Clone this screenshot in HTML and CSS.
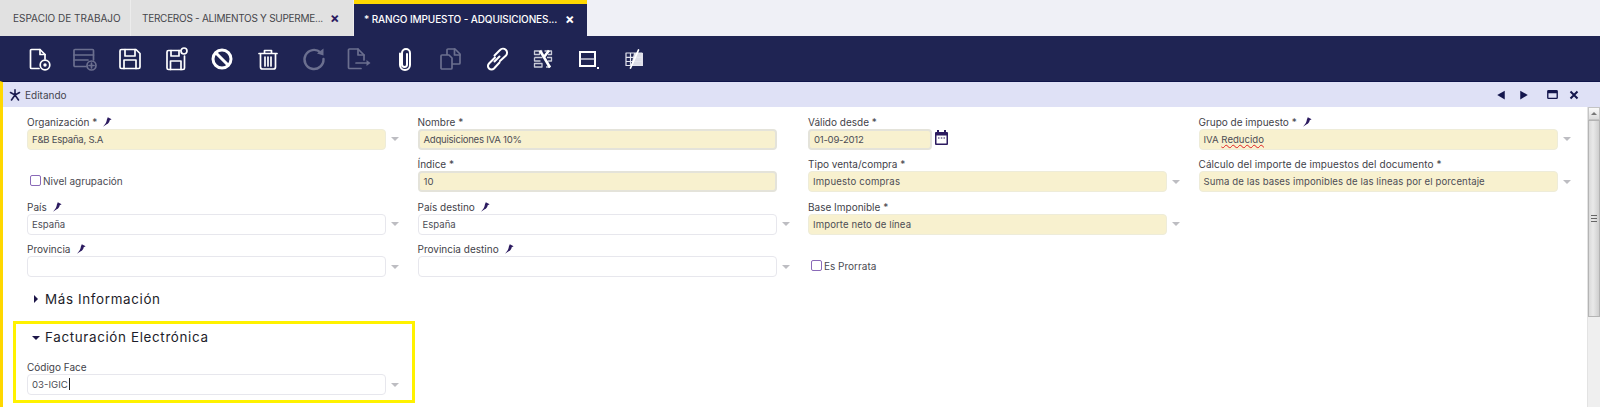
FILE: index.html
```html
<!DOCTYPE html>
<html lang="es">
<head>
<meta charset="utf-8">
<title>Rango impuesto</title>
<link rel="stylesheet" href="styles.css">
</head>
<body>
<svg class="sprites" width="0" height="0" aria-hidden="true">
  <symbol id="pin" viewBox="0 0 10 10"><path d="M5.800 .3 9.600 2.200 7.700 3.200C7.300 5.200 6.300 6.600 4.700 7.300 3.400 8 2.300 8.800 1 9.800 2 8.400 2.900 7.300 3.700 6.200 4.400 4.800 4.800 3.400 4.900 2.500Z"/></symbol>
</svg>

<nav class="tabs">
  <div class="tab tab-first"><span class="tab-text">ESPACIO DE TRABAJO</span></div>
  <div class="tab tab-second"><span class="tab-text">TERCEROS - ALIMENTOS Y SUPERME...</span><span class="tab-x">×</span></div>
  <div class="tab tab-active"><span class="tab-text">* RANGO IMPUESTO - ADQUISICIONES...</span><span class="tab-x">×</span></div>
</nav>

<div class="toolbar">
  <span class="tool"><svg viewBox="0 0 24 24"><path d="M12 21.500H4.500a1 1 0 0 1-1-1V3.500a1 1 0 0 1 1-1h8.500l5 5V12"/><path d="M13 2.500V7.500H18"/><circle cx="18" cy="18" r="4.800"/><circle class="fill" cx="18" cy="18" r="1.700"/></svg></span>
  <span class="tool off"><svg viewBox="0 0 24 24"><path d="M13 19.500H2a1 1 0 0 1-1-1V3.500a1 1 0 0 1 1-1h17.500a1 1 0 0 1 1 1V13"/><path d="M1 8h19.500M1 13h14"/><circle cx="18.500" cy="18.500" r="4.500"/><path d="M18.500 16v5M16 18.500h5"/></svg></span>
  <span class="tool"><svg viewBox="0 0 24 24"><path d="M4 2.500h14l4 4v13.500a1.500 1.500 0 0 1-1.500 1.500h-17a1.500 1.500 0 0 1-1.500-1.500v-16a1.500 1.500 0 0 1 1.500-1.500Z"/><path d="M7 2.500v6.500h10V2.500M6 21.500v-8.500h12v8.500"/></svg></span>
  <span class="tool"><svg viewBox="0 0 24 24"><path d="M16 3.500H4.500a1.500 1.500 0 0 0-1.500 1.500v16a1.500 1.500 0 0 0 1.500 1.500h14.500a1.500 1.500 0 0 0 1.500-1.500V9"/><path d="M7 3.500v5.500h8V3.500M6.500 22.500v-8.500h10.500v8.500"/><circle cx="20" cy="4" r="3"/></svg></span>
  <span class="tool bold"><svg viewBox="0 0 24 24"><circle cx="12" cy="12" r="9"/><path d="M6 6 18 18"/></svg></span>
  <span class="tool"><svg viewBox="0 0 24 24"><path d="M3 6.500h18M8.500 6V3.500h7V6"/><path d="M4.500 7v13a2 2 0 0 0 2 2h11a2 2 0 0 0 2-2V7"/><path d="M9 10v9M12 10v9M15 10v9"/></svg></span>
  <span class="tool off heavy"><svg viewBox="0 0 24 24"><path d="M18.500 5.500A9.500 9.500 0 1 0 21.500 12"/><path class="fill" d="M15 6.500 21.500 1.500V8.500Z"/></svg></span>
  <span class="tool off"><svg viewBox="0 0 24 24"><path d="M14 21.500H2.500a1 1 0 0 1-1-1V3a1 1 0 0 1 1-1h8.500l6 6v5"/><path d="M11 2v6h6M9 16h12"/><path class="fill" d="M19.500 13 23.500 16 19.500 19Z"/></svg></span>
  <span class="tool heavy"><svg viewBox="0 0 24 24"><path d="M7 6.500V18a5 5 0 0 0 10 0V6a4 4 0 0 0-8 0v11.500a2.500 2.500 0 0 0 5 0V7"/></svg></span>
  <span class="tool off"><svg viewBox="0 0 24 24"><path d="M10 22H3a1 1 0 0 1-1-1V9a1 1 0 0 1 1-1h7l3 3v10a1 1 0 0 1-1 1ZM8 8V3a1 1 0 0 1 1-1h7l5 5v9a1 1 0 0 1-1 1h-7"/><path d="M15.500 2v6h5.500"/></svg></span>
  <span class="tool heavy"><svg viewBox="0 0 24 24"><path d="M9.500 14.500 14.500 9.500M10 10.500 4 16.500a3.500 3.500 0 0 0 5 5l5.500-6M9.500 8.500 15 3a3.500 3.500 0 0 1 6 5.500l-6 5.500"/></svg></span>
  <span class="tool wrench"><svg viewBox="0 0 24 24"><path d="M3.500 4h5v3.500h-5ZM13.500 4h7v3.500h-3.500M3.500 10.500h8M16 10.500h4.500v3.500H17M3.500 10.500V14h6M3.500 16.500H11v3.500H3.500ZM18.500 18v2H15"/><path class="thick" d="M9 3.500 19 20.500M18 3.500 13 10M10 3.500v3"/></svg></span>
  <span class="tool frame"><svg viewBox="0 0 24 24"><rect x="4" y="5" width="15" height="14"/><path class="mid" d="M4 12h15"/><rect class="fill" x="21" y="20" width="2" height="2"/></svg></span>
  <span class="tool sheet"><svg viewBox="0 0 24 24"><path class="pale" d="M12 6h9v13H9Z"/><path class="line" d="M4 6h16v12.500H4ZM4 10.300h16M4 14.500h16M8.500 6v12.500"/><path class="thick" d="M16.500 3 8.500 21"/></svg></span>
</div>

<main class="workspace">
  <div class="status">
    <svg class="status-star" viewBox="0 0 12 12"><path d="M6 .8V5M6 6 1.500 3.500M6 6 10.500 3.500M6 6 2.500 11M6 6 9.500 11"/></svg>
    <span class="status-text">Editando</span>
    <span class="status-actions">
      <svg class="sa sa-prev" viewBox="0 0 8 8"><path d="M7 .5V7.500L1 4Z"/></svg>
      <svg class="sa sa-next" viewBox="0 0 8 8"><path d="M1 .5V7.500L7 4Z"/></svg>
      <svg class="sa sa-max" viewBox="0 0 12 10"><path fill-rule="evenodd" d="M1.500 0h9a1.500 1.500 0 0 1 1.500 1.500v7a1.500 1.500 0 0 1-1.500 1.500h-9a1.500 1.500 0 0 1-1.500-1.500v-7a1.500 1.500 0 0 1 1.500-1.500ZM1.500 3.500v5h9v-5Z"/></svg>
      <svg class="sa sa-close" viewBox="0 0 10 10"><path d="M1.500 1.500 8.500 8.500M8.500 1.500 1.500 8.500"/></svg>
    </span>
  </div>

  <div class="content">
    <div class="form">
      <div class="grid">
        <div class="cell"><label class="lab">Organización *<svg class="pin"><use href="#pin"/></svg></label><div class="row"><div class="inp req ls-tight">F&amp;B España, S.A</div><i class="arrow"></i></div></div>
        <div class="cell"><label class="lab">Nombre *</label><div class="row"><div class="inp req text ls-tight">Adquisiciones IVA 10%</div></div></div>
        <div class="cell"><label class="lab">Válido desde *</label><div class="row"><div class="inp req text date ls-tight">01-09-2012</div>
          <svg class="cal" viewBox="0 0 13 15"><path fill-rule="evenodd" d="M2 2V0h2v2h5V0h2v2h1a1 1 0 0 1 1 1v11a1 1 0 0 1-1 1H1a1 1 0 0 1-1-1V3a1 1 0 0 1 1-1ZM1.500 5.500V13.500h10V5.500Z"/><path d="M3 7.500h1.500v1H3ZM5.800 7.500h1.500v1H5.800ZM8.500 7.500H10v1H8.500Z"/></svg></div></div>
        <div class="cell"><label class="lab">Grupo de impuesto *<svg class="pin"><use href="#pin"/></svg></label><div class="row"><div class="inp req">IVA <span class="spell">Reducido</span></div><i class="arrow"></i></div></div>

        <div class="cell"><label class="check"><span class="box"></span>Nivel agrupación</label></div>
        <div class="cell"><label class="lab">Índice *</label><div class="row"><div class="inp req text">10</div></div></div>
        <div class="cell"><label class="lab">Tipo venta/compra *</label><div class="row"><div class="inp req ls-wide">Impuesto compras</div><i class="arrow"></i></div></div>
        <div class="cell"><label class="lab lab-wide">Cálculo del importe de impuestos del documento *</label><div class="row"><div class="inp req ls-fine">Suma de las bases imponibles de las lineas por el porcentaje</div><i class="arrow"></i></div></div>

        <div class="cell"><label class="lab">País<svg class="pin"><use href="#pin"/></svg></label><div class="row"><div class="inp">España</div><i class="arrow"></i></div></div>
        <div class="cell"><label class="lab">País destino<svg class="pin"><use href="#pin"/></svg></label><div class="row"><div class="inp">España</div><i class="arrow"></i></div></div>
        <div class="cell"><label class="lab">Base Imponible *</label><div class="row"><div class="inp req ls-fine">Importe neto de línea</div><i class="arrow"></i></div></div>
        <div class="cell"></div>

        <div class="cell"><label class="lab">Provincia<svg class="pin"><use href="#pin"/></svg></label><div class="row"><div class="inp"></div><i class="arrow"></i></div></div>
        <div class="cell"><label class="lab">Provincia destino<svg class="pin"><use href="#pin"/></svg></label><div class="row"><div class="inp"></div><i class="arrow"></i></div></div>
        <div class="cell"><label class="check"><span class="box"></span>Es Prorrata</label></div>
        <div class="cell"></div>
      </div>

      <h2 class="sec sec-more"><i class="tri-right"></i>Más Información</h2>

      <section class="hl">
        <h2 class="sec sec-fact"><i class="tri-down"></i>Facturación Electrónica</h2>
        <div class="cell cell-hl"><label class="lab">Código Face</label><div class="row"><div class="inp">03-IGIC<span class="caret"></span></div><i class="arrow"></i></div></div>
      </section>
    </div>

    <div class="scroll">
      <div class="sb-btn"><i class="sb-up"></i></div>
      <div class="sb-thumb"><i class="sb-grip"></i></div>
    </div>
  </div>
</main>
</body>
</html>
```
FILE: styles.css
```css
* { box-sizing: border-box; }
html, body { margin: 0; height: 407px; overflow: hidden; background: #fff; }
body { font-family: Inter, "Noto Sans", "Liberation Sans", sans-serif; font-size: 10px; color: #45454f; }
.sprites { display: block; height: 0; }

/* tabs */
.tabs { display: flex; height: 36px; background: #eff0f6; }
.tab { display: flex; align-items: center; height: 36px; background: #e1e1e1; color: #45454a; font-size: 10px; white-space: nowrap; border-right: 1px solid #ececec; }
.tab-first { width: 131px; padding: 0 0 0 13px; }
.tab-second { width: 223px; padding: 0 0 0 11px; }
.tab-active { width: 233px; padding: 0 0 2px 10px; background: #1f2453; color: #fff; border-right: 0; border-top: 4px solid #ffd800; }
.tab-text { display: block; }
.tab-second .tab-text { width: 188px; letter-spacing: -.27px; }
.tab-active .tab-text { width: 201px; font-weight: 500; letter-spacing: -.11px; }
.tab-x { font-size: 14px; font-weight: 700; color: #2c1b60; line-height: 1; }
.tab-active .tab-x { color: #fff; }

/* toolbar */
.toolbar { display: flex; height: 45px; padding-left: 16px; align-items: center; background: #1f2453; }
.tool { display: flex; justify-content: center; align-items: center; width: 45.8px; height: 24px; margin-top: 1px; }
.tool svg { width: 24px; height: 24px; fill: none; stroke: #fff; stroke-width: 1.7; stroke-linecap: round; stroke-linejoin: round; overflow: visible; }
.tool .fill { fill: #fff; stroke: none; }
.tool.off svg { stroke: #6b6f8f; }
.tool.off .fill { fill: #6b6f8f; }
.tool.bold svg { stroke-width: 3; }
.tool.heavy svg { stroke-width: 2; }
.tool.off.heavy svg { stroke-width: 2.4; }
.tool.wrench svg { stroke: #c9cbd8; stroke-width: 1.3; stroke-linecap: butt; }
.tool.wrench .thick { stroke: #fff; stroke-width: 2.6; }
.tool.frame svg { stroke-width: 2; stroke-linecap: butt; stroke-linejoin: miter; }
.tool.frame .mid { stroke-width: 1.300; stroke: #e8e8f2; }
.tool.sheet .pale { fill: #dcdde6; stroke: none; }
.tool.sheet .line { stroke: #e4e5ee; stroke-width: 1.200; }
.tool.sheet .thick { stroke: #fff; stroke-width: 1.800; }

/* workspace */
.workspace { height: 326px; border-left: 3px solid #ffd800; border-top: 1px solid #0f144a; }
.status { display: flex; align-items: center; height: 25px; background: #dfe1f6; color: #45454f; font-size: 10px; padding-left: 6px; }
.status-star { width: 12px; height: 12px; fill: none; stroke: #1c1c50; stroke-width: 1.6; stroke-linecap: round; margin-right: 4px; }
.status-actions { display: flex; align-items: center; margin-left: auto; padding-right: 21px; }
.sa { display: block; fill: #14164d; }
.sa-prev, .sa-next { width: 10px; height: 10px; }
.sa-prev { margin-right: 13px; }
.sa-next { margin-right: 18px; }
.sa-max { width: 11px; height: 9px; margin-right: 11px; }
.sa-close { width: 10px; height: 10px; fill: none; stroke: #14164d; stroke-width: 2; }

.content { display: flex; height: 300px; }
.form { flex: 1; min-width: 0; padding: 8px 0 0 10px; overflow: hidden; }
.grid { display: grid; grid-template-columns: repeat(4, 390.5px); grid-auto-rows: 42.5px; padding-left: 14px; }
.cell { min-width: 0; }
.lab { display: flex; align-items: center; height: 13.5px; font-size: 10px; color: #3f3f49; white-space: pre; }
.lab-wide { letter-spacing: .08px; }
.pin { width: 10px; height: 10px; fill: #2c1b60; margin-left: 5px; }
.row { display: flex; align-items: center; }
.inp { width: 359px; height: 21px; line-height: 19px; padding-left: 4px; border: 1px solid #e7e7ed; border-radius: 4px; background: #fff; font-size: 9.6px; color: #4d4d55; white-space: nowrap; }
.req { background: #f8f1cf; border-color: #eeecd9; }
.text { border: 2px solid #e4e3da; line-height: 17px; }
.date { width: 124px; }
.ls-tight { letter-spacing: -.26px; }
.ls-wide { letter-spacing: .18px; }
.ls-fine { letter-spacing: .1px; }
.arrow { display: block; width: 0; height: 0; margin-left: 5px; border-style: solid; border-width: 4.5px 4px 0; border-color: #bdbdc2 transparent transparent; }
.cal { width: 13px; height: 15px; margin: -3px 0 0 3px; fill: #2c1b60; }
.spell { text-decoration: underline wavy #e02020 1px; text-underline-offset: 1px; }
.check { display: flex; align-items: center; gap: 2px; padding: 17px 0 0 3px; font-size: 10px; color: #4a4a52; }
.box { width: 11px; height: 11px; border: 1px solid #8a6ab8; border-radius: 2px; background: #fff; }

.sec { display: flex; align-items: center; margin: 0; font-weight: 400; font-size: 13.4px; color: #1d1d2a; letter-spacing: .65px; white-space: nowrap; }
.sec-more { height: 28px; margin: 0 0 8px 0; padding-left: 21px; }
.sec-fact { height: 26px; padding-left: 16px; }
.tri-right { display: block; width: 0; height: 0; margin-right: 7px; border-style: solid; border-width: 4px 0 4px 4px; border-color: transparent transparent transparent #1d1648; }
.tri-down { display: block; width: 0; height: 0; margin: 1px 5px 0 0; border-style: solid; border-width: 4px 4px 0; border-color: #1d1648 transparent transparent; }
.hl { width: 402px; height: 82px; border: 3px solid #fff200; }
.cell-hl { padding: 10.5px 0 0 11px; }
.caret { display: inline-block; width: 1px; height: 12px; margin-left: 1px; vertical-align: -2px; background: #222; }

/* scrollbar */
.scroll { width: 13px; height: 300px; background: #efefef; border-left: 1px solid #e3e3e3; }
.sb-btn { display: flex; justify-content: center; align-items: center; height: 13px; background: linear-gradient(#fafafa, #dcdcdc); border: 1px solid #c4c4c4; }
.sb-up { display: block; width: 0; height: 0; border-style: solid; border-width: 0 3px 3px; border-color: transparent transparent #777; }
.sb-thumb { display: flex; justify-content: center; align-items: center; height: 197px; background: linear-gradient(90deg, #dadada, #e9e9e9 40%, #cfcfcf); border: 1px solid #b4b4b4; }
.sb-grip { display: block; width: 6px; height: 7px; background: repeating-linear-gradient(#666 0 1px, transparent 1px 3px); }
```
